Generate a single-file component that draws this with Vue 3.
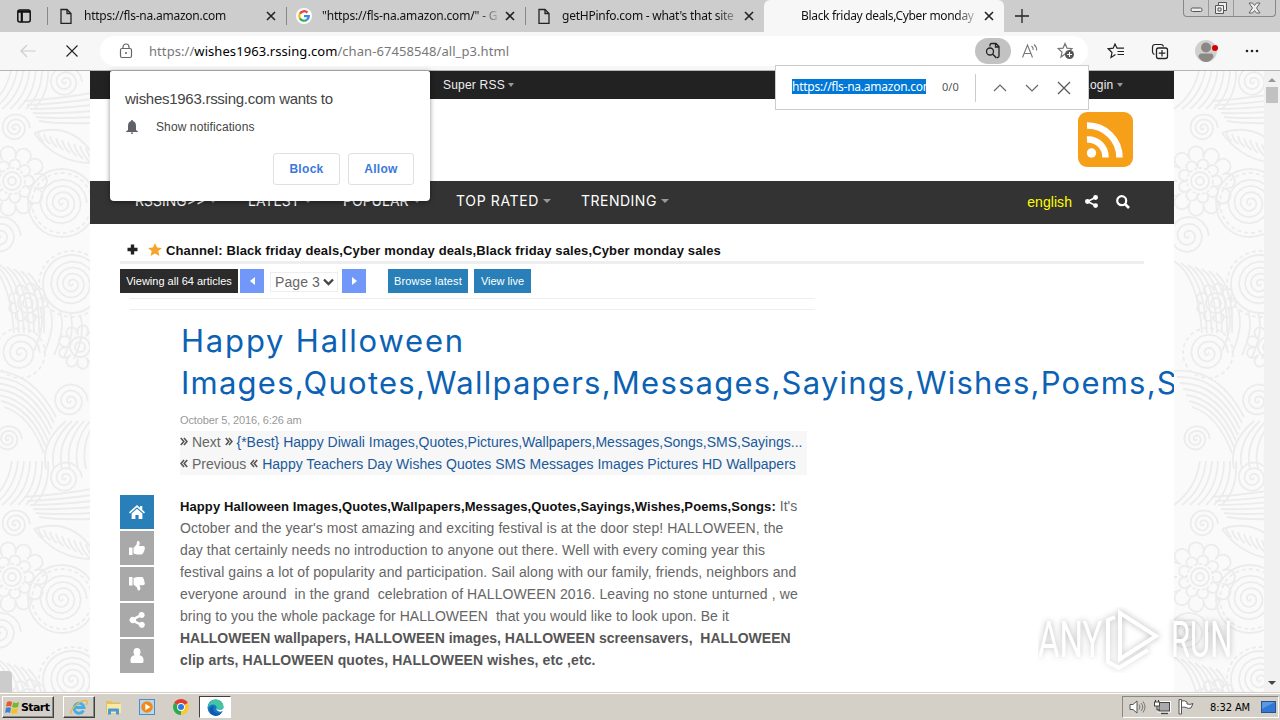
<template>
  <div class="screen">
    <header class="tabStrip">
      <div class="tabMenu">
        <svg width="14" height="14" viewBox="0 0 14 14"><rect x=".8" y="1" width="12.4" height="12" rx="2" fill="none" stroke="#111" stroke-width="1.5"/><path d="M1 2.6h12M4.8 3v10" stroke="#111" stroke-width="2.2"/></svg>
      </div>
      <div v-for="tab in tabs" :key="tab.title" class="tab" :class="tab.kind">
        <svg v-if="tab.icon === 'page'" class="tabIcon" width="12" height="17" viewBox="0 0 12 17"><path d="M1 1.5h6l4 4v9.8H1zM7 1.5v4h4" fill="none" stroke="#222" stroke-width="1.3"/></svg>
        <svg v-else-if="tab.icon === 'google'" class="tabIcon" width="16" height="16" viewBox="0 0 16 16">
          <circle cx="8" cy="8" r="8" fill="#fff"/>
          <g fill="none" stroke-width="2.2"><path d="M11.4 4.6A4.8 4.8 0 0 0 3.8 5.8" stroke="#ea4335"/><path d="M3.8 5.8a4.8 4.8 0 0 0 0 4.5" stroke="#fbbc05"/><path d="M3.8 10.3a4.8 4.8 0 0 0 7.3 1.3" stroke="#34a853"/><path d="M11.1 11.6a4.8 4.8 0 0 0 1.7-3.5H8" stroke="#4285f4"/></g>
        </svg>
        <span class="tabTitle">{{ tab.title }}</span>
        <svg class="tabClose" width="10" height="10" viewBox="0 0 10 10"><path d="M1 1l8 8M9 1L1 9" stroke="#222" stroke-width="1.6"/></svg>
      </div>
      <svg class="newTab" width="14" height="14" viewBox="0 0 14 14"><path d="M7 0v14M0 7h14" stroke="#222" stroke-width="1.3"/></svg>
      <div class="windowButtons">
        <span><svg width="13" height="10" viewBox="0 0 13 10"><rect x="1" y="5" width="11" height="3.5" rx="1.5" fill="#eee" stroke="#555"/></svg></span>
        <span><svg width="14" height="14" viewBox="0 0 14 14"><path d="M4.5 1.5h8v8h-3v3h-8v-8h3z" fill="#eee" stroke="#555"/><path d="M4.5 4.5h5v5M4 7h3v3H4z" fill="none" stroke="#555"/></svg></span>
        <span><svg width="13" height="12" viewBox="0 0 13 12"><path d="M1 1h3.5l2 2.5 2-2.5H12L8.5 6 12 11H8.500l-2-2.500-2 2.500H1L4.500 6z" fill="#eee" stroke="#666"/></svg></span>
      </div>
    </header>

    <div class="toolbar">
      <svg class="back" width="16" height="14" viewBox="0 0 16 14"><path d="M15.500 7H1M7 1L1 7l6 6" fill="none" stroke="#ccc" stroke-width="1.2"/></svg>
      <svg class="stop" width="12" height="12" viewBox="0 0 12 12"><path d="M.5.5l11 11M11.500.5l-11 11" stroke="#222" stroke-width="1.1"/></svg>
      <div class="address">
        <svg class="lock" width="14" height="16" viewBox="0 0 14 16"><rect x="1.500" y="5.500" width="11" height="9" rx="1.500" fill="none" stroke="#666" stroke-width="1.2"/><path d="M4 5.500V4a3 3 0 0 1 6 0v1.500" fill="none" stroke="#666" stroke-width="1.2"/><circle cx="7" cy="10" r="1" fill="#666"/></svg>
        <span class="url">https://<b>wishes1963.rssing.com</b>/chan-67458548/all_p3.html</span>
        <span class="findPill">
          <svg width="16" height="18" viewBox="0 0 16 18"><path d="M5 4.500V3q0-1.500 1.500-1.500H11l3 3V14q0 1.500-1.500 1.500H12M10.500 1.500v3.500H14" fill="none" stroke="#222" stroke-width="1.300"/><circle cx="5" cy="9.500" r="3.500" fill="none" stroke="#222" stroke-width="1.300"/><path d="M7.500 12l4 4" stroke="#222" stroke-width="1.400"/></svg>
        </span>
        <svg class="readAloud" width="18" height="16" viewBox="0 0 18 16"><g fill="none" stroke="#777" stroke-width="1.100"><path d="M1.500 14.500L6.500 2l5 12.500M3 10.500h7"/><path d="M10.500 3q2 1.500 1.700 4M13 1.500q3 2.500 2.600 6"/></g></svg>
        <svg class="addStar" width="18" height="18" viewBox="0 0 18 18"><path d="M8 1.500l2 4.600 5 .5-3.700 3.300L8 12 4 15l1-5L1.200 6.600l4.900-.5z" fill="none" stroke="#777" stroke-width="1.2"/><circle cx="12.500" cy="12.500" r="4.500" fill="#555"/><path d="M12.500 10v5M10 12.500h5" stroke="#fff"/></svg>
      </div>
      <svg class="favs" width="18" height="16" viewBox="0 0 18 16"><path d="M8.500 11.500L4 14.500l1-5L1.200 5.800l5-.6L8 1l2 4.200h7M10.500 8.500H17M10.500 11.500H17" fill="none" stroke="#222" stroke-width="1.200"/></svg>
      <svg class="collections" width="18" height="17" viewBox="0 0 18 17"><path d="M3.500 11.500Q1.800 11 1.500 9V4q.2-2.500 2.500-2.500h6q2 0 2.500 2" fill="none" stroke="#222" stroke-width="1.200"/><rect x="5.500" y="5" width="11" height="10.500" rx="2" fill="none" stroke="#222" stroke-width="1.300"/><path d="M11 7v6.500M7.700 10.200h6.600" stroke="#222" stroke-width="1.200"/></svg>
      <svg class="profile" width="24" height="24" viewBox="0 0 24 24"><circle cx="11" cy="12" r="11" fill="#d2d0cf"/><circle cx="11" cy="8.500" r="5" fill="#8c8886"/><path d="M3.500 18q0-3.500 3-3.500h9q3 0 3 3.500-3 5-7.500 5t-7.500-5z" fill="#8c8886"/><circle cx="20" cy="9" r="3" fill="#d90000"/></svg>
      <svg class="more" width="14" height="4" viewBox="0 0 14 4"><g fill="#222"><circle cx="2" cy="2" r="1.300"/><circle cx="7" cy="2" r="1.300"/><circle cx="12" cy="2" r="1.300"/></g></svg>
    </div>

    <main class="viewport">
      <svg class="wallpaper" width="1264" height="621">
        <defs>
          <g id="ornament" fill="none" stroke="#ececec" stroke-width="1.800">
            <path v-for="(d, i) in swirls" :key="i" :d="d"/>
            <circle v-for="(c, i) in rings" :key="'r' + i" :cx="c[0]" :cy="c[1]" :r="c[2]" :stroke-dasharray="c[3]"/>
          </g>
        </defs>
        <rect width="1264" height="621" fill="#fafafa"/>
        <use v-for="(t, i) in tiles" :key="i" href="#ornament" :x="t[0]" :y="t[1]"/>
      </svg>

      <div class="site">
        <div class="topBar">
          <span class="superRss">Super RSS <i class="caret"></i></span>
          <span class="login">Login <i class="caret"></i></span>
        </div>
        <div class="brand">
          <svg width="55" height="55" viewBox="0 0 55 55"><rect width="55" height="55" rx="9" fill="#f6a01a"/><circle cx="13.500" cy="41" r="4.700" fill="#fff"/><path d="M9 27.500A17.500 17.500 0 0 1 27.500 45.500M9 13.500A32 32 0 0 1 41.500 45.500" fill="none" stroke="#fff" stroke-width="6.500"/></svg>
        </div>
        <nav class="mainNav">
          <span v-for="item in menu" :key="item.label" :class="item.cls">{{ item.label }}<i class="caret"></i></span>
          <span class="lang">english</span>
          <svg class="navShare" width="13" height="13" viewBox="0 0 16 16"><path d="M13 3L3 8l10 5" fill="none" stroke="#fff" stroke-width="2"/><g fill="#fff"><circle cx="13" cy="3" r="3"/><circle cx="3" cy="8" r="3"/><circle cx="13" cy="13" r="3"/></g></svg>
          <svg class="navSearch" width="14" height="14" viewBox="0 0 14 14"><circle cx="5.700" cy="5.700" r="4.500" fill="none" stroke="#fff" stroke-width="2.200"/><path d="M9 9l4 4" stroke="#fff" stroke-width="2.600"/></svg>
        </nav>

        <div class="channel">
          <svg class="plus" width="11" height="11" viewBox="0 0 11 11"><path d="M5.500.5v10M.5 5.500h10" stroke="#222" stroke-width="3.400"/></svg>
          <svg class="star" width="14" height="13" viewBox="0 0 14 13"><path d="M7 0l2 4.400 5 .5-3.700 3.200L11.400 13 7 10.400 2.600 13l1.100-4.900L0 4.900l5-.5z" fill="#f4a52b"/></svg>
          <b>Channel: Black friday deals,Cyber monday deals,Black friday sales,Cyber monday sales</b>
        </div>
        <div class="pager">
          <span class="viewing">Viewing all 64 articles</span>
          <span class="arrow"><svg width="5" height="8" viewBox="0 0 5 8"><path d="M5 0v8L0 4z" fill="#fff"/></svg></span>
          <span class="select">Page 3<svg width="11" height="8" viewBox="0 0 11 8"><path d="M1 1.500l4.500 4.500L10 1.500" fill="none" stroke="#444" stroke-width="2.300"/></svg></span>
          <span class="arrow"><svg width="5" height="8" viewBox="0 0 5 8"><path d="M0 0v8l5-4z" fill="#fff"/></svg></span>
          <span class="blueButton latest">Browse latest</span>
          <span class="blueButton live">View live</span>
        </div>
        <div class="rules"></div>

        <div class="article">
          <aside class="sideIcons">
            <span v-for="icon in sideIcons" :key="icon.name" :class="icon.name">
              <svg width="16" height="16" viewBox="0 0 16 16"><path :d="icon.d" fill="#fff"/></svg>
            </span>
          </aside>
          <div class="post">
            <h1><span class="t1">Happy Halloween</span><br><span class="t2">Images,Quotes,Wallpapers,Messages,Sayings,Wishes,Poems,Songs</span></h1>
            <div class="date">October 5, 2016, 6:26 am</div>
            <div class="siblings">
              <div class="n1"><svg class="dbl" width="8" height="9" viewBox="0 0 8 9"><path :d="chevrons.next"/></svg> Next <svg class="dbl" width="8" height="9" viewBox="0 0 8 9"><path :d="chevrons.next"/></svg> <a>{*Best} Happy Diwali Images,Quotes,Pictures,Wallpapers,Messages,Songs,SMS,Sayings...</a></div>
              <div class="n2"><svg class="dbl" width="8" height="9" viewBox="0 0 8 9"><path :d="chevrons.prev"/></svg> Previous <svg class="dbl" width="8" height="9" viewBox="0 0 8 9"><path :d="chevrons.prev"/></svg> <a>Happy Teachers Day Wishes Quotes SMS Messages Images Pictures HD Wallpapers</a></div>
            </div>
            <div class="copy">
              <p class="l1"><b>Happy Halloween Images,Quotes,Wallpapers,Messages,Quotes,Sayings,Wishes,Poems,Songs:</b> It's</p>
              <p v-for="(line, i) in copy" :key="i" :class="'c' + i">{{ line }}</p>
              <p v-for="(line, i) in boldCopy" :key="line" class="strong" :class="'s' + i">{{ line }}</p>
            </div>
          </div>
        </div>
      </div>

      <div class="scrollbar"><i class="up"></i><i class="thumb"></i><i class="down"></i></div>
      <div class="statusBubble"></div>
    </main>

    <footer class="taskbar">
      <div class="start">
        <svg width="15" height="15" viewBox="0 0 15 15"><path d="M2 2q2.500-1.500 5 0L6 6.800q-2.500-1.500-5 0z" fill="#e8582b"/><path d="M8 2.300q3 1.500 6-.3l-1 5q-3 1.500-6 0z" fill="#78b62f"/><path d="M1 8q2.500-1.500 5 0l-1 5q-2.500-1.500-5 0z" fill="#3c82d4"/><path d="M7 8.300q3 1.500 6 0l-1 4.700q-3 1.500-6 0z" fill="#f8c21c"/></svg>
        Start
      </div>
      <div class="task ie"><svg width="18" height="17" viewBox="0 0 18 17"><path d="M13.500 11.500A5 5 0 1 1 14 8.500H5" fill="none" stroke="#45aee8" stroke-width="2.800"/><path d="M1 15C-1 11 12-1 17 2c1 1 0 3-1 4" fill="none" stroke="#e8b93a" stroke-width="1.300"/></svg></div>
      <div class="task"><svg width="17" height="16" viewBox="0 0 17 16"><path d="M1 2h5l1 1.500h8V14H1z" fill="#e0c060"/><path d="M2 5h14v9H2z" fill="#f8e9a6"/><path d="M3 15.500v-5q0-1 1-1h9q1 0 1 1v5h-3v-3H6v3z" fill="#4b9bd0"/></svg></div>
      <div class="task"><svg width="16" height="16" viewBox="0 0 16 16"><rect x=".5" y=".5" width="15" height="15" fill="#b9d7f0" stroke="#4c8dc8"/><circle cx="8" cy="8" r="5.800" fill="#f28a18"/><path d="M6.300 4.700v6.600L11.500 8z" fill="#fff"/></svg></div>
      <div class="task"><svg width="16" height="16" viewBox="0 0 16 16"><path d="M8 8L1.100 4A8 8 0 0 1 14.900 4z" fill="#e33b2e"/><path d="M8 8l6.900-4A8 8 0 0 1 8 16z" fill="#fcc934"/><path d="M8 8v8A8 8 0 0 1 1.100 4z" fill="#2da94f"/><circle cx="8" cy="8" r="3.900" fill="#fff"/><circle cx="8" cy="8" r="3" fill="#2a7be4"/></svg></div>
      <div class="task active"><svg width="17" height="17" viewBox="0 0 17 17"><circle cx="8.500" cy="8.500" r="8" fill="#1377c9"/><path d="M1 7Q3 .5 9 .5q7 .5 7.500 7-.5 3.500-5 3.500-3-.5-1.800-2.500Q9 5.500 6 5.500q-3.500 0-5 3z" fill="#43c6a0"/><path d="M6.500 7q-1.500 6 4 7.500 3 0 4.500-1.500-2 4-6.500 4-6-1-6-6 1-3.500 4-4z" fill="#1459a8"/><path d="M9.700 8.300Q8.600 11 12.500 11q3.200 0 4.200-2.200l.3 2.700q-2.500 1.500-5 1-3.500-1-2.300-4.200z" fill="#fff"/></svg></div>
      <div class="tray">
        <svg width="17" height="14" viewBox="0 0 17 14"><path d="M1 4.500h3l4-3.500v12L4 9.500H1z" fill="#fff" stroke="#555"/><path d="M10 4.500q2 2.500 0 5M12 3q3.500 4 0 8M14 1.500q4 5.500 0 11" fill="none" stroke="#777"/></svg>
        <svg class="net" width="17" height="16" viewBox="0 0 17 16"><rect x="5" y="3.500" width="10.500" height="8.500" fill="#aaa" stroke="#fff" stroke-width="3"/><rect x="5" y="3.500" width="10.500" height="8.500" fill="#aaa" stroke="#444"/><path d="M7 14.500h7" stroke="#444" stroke-width="1.300"/><path d="M1.500 1v3M4.500 1v3M3 7v4h3" fill="none" stroke="#333"/><rect x=".5" y="3" width="5" height="4" fill="#fff" stroke="#444"/></svg>
        <svg class="flag" width="17" height="16" viewBox="0 0 17 16"><path d="M1 .5h2.500v14.500H1z" fill="#fff" stroke="#555"/><path d="M3.500 2q3-1 5.500 1v2q3 1 6-.5L13 9q-3 1-5-.5-2-1-4.500 0z" fill="#fff" stroke="#555"/></svg>
        <span class="clock">8:32 AM</span>
        <svg class="desktop" width="16" height="13" viewBox="0 0 16 13"><rect x=".5" y=".5" width="14" height="11" fill="#2f78d6" stroke="#27518f"/><path d="M1 1h13L1 8z" fill="#5b97e2"/></svg>
      </div>
    </footer>

    <div class="permission">
      <div class="ask">wishes1963.rssing.com wants to</div>
      <div class="what"><svg width="12" height="14" viewBox="0 0 12 14"><path d="M6 0q1 0 1.100 1.200Q10 2 10 6v4l2 1.500v.5H0v-.5L2 10V6q0-4 2.900-4.800Q5 0 6 0zM4.700 12.500h2.600Q7 14 6 14t-1.300-1.500z" fill="#5f6368"/></svg><span>Show notifications</span></div>
      <div class="answers"><span class="block">Block</span><span class="allow">Allow</span></div>
    </div>

    <div class="findBar">
      <span class="query"><mark>https://fls-na.amazon.com</mark></span>
      <span class="count">0/0</span>
      <svg width="14" height="14" viewBox="0 0 14 14"><path d="M1 10l6-6 6 6" fill="none" stroke="#666" stroke-width="1.200"/></svg>
      <svg width="14" height="14" viewBox="0 0 14 14"><path d="M1 4l6 6 6-6" fill="none" stroke="#666" stroke-width="1.200"/></svg>
      <svg width="14" height="14" viewBox="0 0 14 14"><path d="M1 1l12 12M13 1L1 13" fill="none" stroke="#555" stroke-width="1.200"/></svg>
    </div>

    <div class="watermark">
      <span class="any">ANY</span>
      <svg width="60" height="66" viewBox="0 0 60 66"><g fill="none" stroke="#fff" stroke-width="4"><path d="M16 6v46l36-23z"/><path d="M11 10l-7 3v42l11 6 29-18"/></g></svg>
      <span class="run">RUN</span>
    </div>
  </div>
</template>

<script setup>
const tabs = [
  { title: "https://fls-na.amazon.com", icon: "page", kind: "first" },
  { title: "\"https://fls-na.amazon.com/\" - G", icon: "google", kind: "second" },
  { title: "getHPinfo.com - what's that site", icon: "page", kind: "third" },
  { title: "Black friday deals,Cyber monday", icon: "", kind: "current" },
];

const menu = [
  { label: "RSSING>>", cls: "m1" },
  { label: "LATEST", cls: "m2" },
  { label: "POPULAR", cls: "m3" },
  { label: "TOP RATED", cls: "m4" },
  { label: "TRENDING", cls: "m5" },
];

const copy = [
  "October and the year's most amazing and exciting festival is at the door step! HALLOWEEN, the",
  "day that certainly needs no introduction to anyone out there. Well with every coming year this",
  "festival gains a lot of popularity and participation. Sail along with our family, friends, neighbors and",
  "everyone around  in the grand  celebration of HALLOWEEN 2016. Leaving no stone unturned , we",
  "bring to you the whole package for HALLOWEEN  that you would like to look upon. Be it",
];

const boldCopy = [
  "HALLOWEEN wallpapers, HALLOWEEN images, HALLOWEEN screensavers,  HALLOWEEN",
  "clip arts, HALLOWEEN quotes, HALLOWEEN wishes, etc ,etc.",
];

const chevrons = {
  next: "M.8 1l3 3.500-3 3.500M4 1l3 3.500L4 8",
  prev: "M7.200 1l-3 3.500 3 3.500M4 1L1 4.500 4 8",
};

const sideIcons = [
  { name: "home", d: "M8 1l3 2.700V2h2.300v3.800L16 8.300l-1 1.200L8 3.300 1 9.500 0 8.300zM8 4.800l5.400 4.700V15H9.600v-4H6.400v4H2.600V9.500z" },
  { name: "up", d: "M0 7.500h3.500V15H0zM4.500 8l3-3.500L8.200 1q2.600-.5 2.600 2.200L10 6h4.500q1.500.3 1.200 1.700.5 1-.3 1.800.3 1.200-.6 1.900.2 1.200-.8 1.700-.2 1.400-1.500 1.400H8L4.500 13.500z" },
  { name: "down", d: "M0 1h3.500v8.500H0zM4.500 2L8 1h5q1.500.3 1.300 1.600 1 .7.600 1.800.9.700.5 1.900.7.900.2 2-.3 1-1.600 1h-3.500l1 3q-.2 2.800-2.600 2.200L8 11.500 4.500 8.500z" },
  { name: "share", d: "M12.500 0a3 3 0 1 1-1.800 5.300L7 7.200v1.600l3.700 1.900A3 3 0 1 1 9.800 13L5.500 10.700A3.200 3.200 0 1 1 5.500 5.300L9.700 3A3 3 0 0 1 12.500 0z" },
  { name: "user", d: "M8 0q3.500 0 3.500 4 0 2-1 3.300Q14.500 8 14.500 12v1.500q0 1.500-1.500 1.500H3q-1.500 0-1.500-1.500V12q0-4 4-4.700Q4.500 6 4.500 4 4.500 0 8 0z" },
];

// ornament of the page wallpaper, repeats every 396px
const tiles = [[0, 0], [0, 396], [1188, 0], [1188, 396]];

const range = (n) => Array.from({ length: n }, (_, i) => i);

const spiral = (cx, cy, r, turns = 3) => {
  let d = `M${cx} ${cy}`;
  for (let i = 1; i <= turns * 16; i++) {
    const a = (i / 16) * Math.PI * 2;
    const rr = (r * i) / (turns * 16);
    d += `L${(cx + rr * Math.cos(a)).toFixed(1)} ${(cy + rr * Math.sin(a)).toFixed(1)}`;
  }
  return d;
};

const petals = (cx, cy, r1, r2, n) =>
  range(n).map((i) => {
    const p = (a, r) => `${(cx + r * Math.cos(a)).toFixed(1)} ${(cy + r * Math.sin(a)).toFixed(1)}`;
    const a = (i / n) * Math.PI * 2;
    const w = Math.PI / n;
    return `M${p(a - w, r1)}Q${p(a - w, r2)} ${p(a, r2)}Q${p(a + w, r2)} ${p(a + w, r1)}`;
  }).join("");

const swirls = [
  spiral(65, 11, 17), spiral(15, 57, 15), spiral(62, 132, 25, 4), spiral(0, 165, 21), spiral(72, 213, 24, 4),
  spiral(20, 282, 20), spiral(70, 330, 18), spiral(8, 368, 14),
  petals(12, 110, 13, 22, 9), petals(12, 110, 23, 35, 11), petals(28, 232, 12, 20, 9), petals(80, 276, 12, 22, 9),
  // arcs of the top left corner
  ...range(7).map((i) => `M${-14 + i * 8} 38Q${8 + i * 7} 22 ${12 + i * 6} -6`),
  // long waves under the first spiral
  ...range(6).map((i) => `M${24 + i * 3} ${30 + i * 4}Q56 ${28 + i * 5} 92 ${22 + i * 6}`),
  // fern leaf
  "M34 62Q70 50 92 82M34 62Q56 92 92 92",
  ...range(9).map((i) => `M${38 + i * 6} ${61 + i * 2}q2 8 ${6 + i * .5} ${9 + i}`),
  // fan left of the lower spiral
  ...range(7).map((i) => `M${-14 + i * 7} ${190 + i * 2}Q${10 + i * 6} ${205 + i * 2} ${14 + i * 5} 262`),
  ...range(7).map((i) => `M${-14 + i * 3} ${300 + i * 6}Q30 ${296 + i * 8} ${56 - i * 2} ${346 + i * 6}`),
  ...range(6).map((i) => `M${46 + i * 8} 398Q${40 + i * 8} 372 ${66 + i * 6} 350`),
  ...range(5).map((i) => `M${40 + i * 10} ${236 + i * 2}q6 18 -6 44`),
];

const rings = [
  [12, 110, 4], [12, 110, 9], [12, 110, 13, "3 2"], [62, 132, 30, "4 3"], [62, 132, 34],
  [72, 213, 29], [72, 213, 33, "4 3"], [28, 232, 5], [28, 232, 10], [80, 276, 5], [80, 276, 10], [20, 282, 25, "4 3"],
];
</script>

<style>
html,
body{
  overflow: hidden;
}
</style>

<style scoped>
.screen{
  position: relative;
  display: flex;
  flex-direction: column;
  width: 1280px;
  height: 720px;
  overflow: hidden;
  background: #fff;
  font-family: "Liberation Sans", Arial, sans-serif;
  white-space: nowrap;
}

.screen svg{
  display: block;
  flex: none;
}

/* =========================
   Tabs
========================= */
.tabStrip{
  display: flex;
  height: 32px;
  flex: none;
  background: #cdcdcd;
  font: 12px/32px "Noto Sans", sans-serif;
  letter-spacing: -.24px;
  color: #111;
}

.tabMenu{
  width: 47px;
  padding: 9px 0 0 17px;
  box-sizing: border-box;
}

.tab{
  display: flex;
  align-items: center;
  width: 239px;
  box-sizing: border-box;
  padding: 0 10px 0 13px;
  position: relative;
}

.tab::before{
  content: "";
  position: absolute;
  left: 0;
  top: 7px;
  width: 1px;
  height: 18px;
  background: #888;
}

.tab.current{
  width: 240px;
  background: #f7f7f7;
  border-radius: 6px 6px 0 0;
  padding-left: 37px;
  letter-spacing: -.33px;
}

.tab.current::before{ display: none; }

.tabIcon{ margin-right: 12px; }
.second .tabIcon{ margin: 0 10px 0 -3px; }

.tabTitle{
  flex: 1;
  -webkit-mask-image: linear-gradient(90deg, #000 155px, transparent 180px);
  mask-image: linear-gradient(90deg, #000 155px, transparent 180px);
}

.second{ letter-spacing: -.18px; }

.newTab{ margin: 9px 0 0 11px; }

.windowButtons{
  display: flex;
  margin: 0 4px 0 auto;
  height: 16px;
  border: 1px solid #888;
  border-top: 0;
  border-radius: 0 0 4px 4px;
}

.windowButtons span{
  display: flex;
  align-items: center;
  justify-content: center;
  width: 24px;
  border-right: 1px solid #999;
}

.windowButtons span:last-child{
  width: 41px;
  border: 0;
}

/* =========================
   Toolbar
========================= */
.toolbar{
  display: flex;
  align-items: center;
  height: 38px;
  flex: none;
  background: #f7f7f7;
  border-bottom: 1px solid #b5b5b5;
}

.back{ margin-left: 20px; }
.stop{ margin-left: 30px; }

.address{
  display: flex;
  align-items: center;
  width: 988px;
  height: 30px;
  margin-left: 22px;
  border-radius: 15px;
  background: #fff;
  box-sizing: border-box;
}

.lock{ margin-left: 19px; }

.url{
  flex: 1;
  margin-left: 16px;
  font: 13px/30px "Noto Sans", sans-serif;
  letter-spacing: .07px;
  color: #777;
}

.url b{
  font-weight: 400;
  color: #000;
}

.findPill{
  display: flex;
  align-items: center;
  justify-content: center;
  width: 36px;
  height: 26px;
  border-radius: 13px;
  background: #c2c2c2;
}

.readAloud{ margin-left: 10px; }
.addStar{ margin: 0 13px 0 18px; }
.favs{ margin-left: 19px; }
.collections{ margin-left: 26px; }
.profile{ margin-left: 26px; }
.more{ margin-left: 26px; }

/* =========================
   Page
========================= */
.viewport{
  position: relative;
  display: flex;
  height: 621px;
  flex: none;
}

.wallpaper{
  position: absolute;
  left: 0;
  top: 0;
}

.site{
  position: relative;
  width: 1084px;
  margin-left: 90px;
  overflow: hidden;
  background: #fff;
}

.caret{
  display: inline-block;
  border: 3.5px solid transparent;
  border-top: 4px solid #999;
  border-bottom: 0;
  vertical-align: 2px;
}

.topBar{
  display: flex;
  justify-content: space-between;
  height: 28px;
  background: #222;
  color: #eee;
  font-size: 12px;
  line-height: 28px;
  letter-spacing: .2px;
}

.superRss{ margin-left: 353px; }
.login{ margin-right: 51px; }

.brand{
  display: flex;
  justify-content: flex-end;
  height: 82px;
  padding: 13px 41px 0 0;
  box-sizing: border-box;
}

.mainNav{
  display: flex;
  height: 43px;
  background: #333;
  color: #fff;
  font: 14px/40px Inter, sans-serif;
}

.mainNav .caret{
  margin-left: 4px;
  border-width: 4px 4px 0;
  vertical-align: 3px;
}

.m1{ width: 113px; margin-left: 45px; }
.m2{ width: 95px; }
.m3{ width: 113px; }
.m4{ width: 125px; letter-spacing: .65px; }
.m5{ letter-spacing: .5px; }

.lang{
  margin-left: auto;
  font: 14px/42px "Liberation Sans", Arial, sans-serif;
  letter-spacing: .05px;
  color: #ff0;
}

.navShare{ margin: 14px 0 0 13px; }
.navSearch{ margin: 14px 44px 0 18px; }

.channel{
  display: flex;
  align-items: center;
  height: 40px;
  margin: 0 30px;
  padding: 13px 0 0 7px;
  box-sizing: border-box;
  border-bottom: 3px solid #eee;
  font-size: 13px;
  line-height: 15px;
  letter-spacing: .13px;
  color: #111;
}

.channel b{ padding-top: 2px; }

.star{ margin: 0 4px 0 10px; }

.pager{
  display: flex;
  height: 24px;
  margin: 5px 0 0 30px;
  font-size: 11px;
  line-height: 24px;
  color: #fff;
}

.viewing{
  width: 118px;
  background: #2b2b2b;
  text-align: center;
}

.arrow{
  display: flex;
  align-items: center;
  justify-content: center;
  width: 24px;
  margin-left: 2px;
  background: #7198f8;
}

.select{
  display: flex;
  align-items: center;
  width: 68px;
  height: 20px;
  margin: 3px 2px 0 6px;
  padding-left: 4px;
  box-sizing: border-box;
  border: 1px solid #eee;
  color: #666;
  font-size: 14px;
  letter-spacing: .1px;
}

.select svg{ margin-left: 3px; }

.blueButton{
  background: #2980b9;
  text-align: center;
}

.latest{
  width: 80px;
  margin-left: 22px;
  letter-spacing: .15px;
}

.live{ width: 57px; margin-left: 6px; }

.rules{
  width: 685px;
  height: 10px;
  margin: 5px 0 0 40px;
  border-top: 1px solid #eee;
  border-bottom: 1px solid #eee;
}

.article{ display: flex; }

.sideIcons{
  display: flex;
  flex-direction: column;
  gap: 2px;
  margin: 185px 0 0 30px;
}

.sideIcons span{
  display: flex;
  align-items: center;
  justify-content: center;
  width: 34px;
  height: 34px;
  background: #a9a9a9;
}

.sideIcons .home{ background: #2980b9; }

.post{ margin-left: 26px; }

h1{
  margin: 10px 0 0;
  padding-left: 1px;
  font: 400 31px/42px Inter, sans-serif;
  color: #0b62b4;
}

.t1{ letter-spacing: 1.82px; }
.t2{ letter-spacing: 1.24px; }

.date{
  margin-top: 9px;
  font-size: 11px;
  line-height: 14px;
  letter-spacing: -.13px;
  color: #999;
}

.siblings{
  width: 627px;
  margin-top: 4px;
  background: #f7f7f7;
  font-size: 14px;
  line-height: 22px;
  color: #666;
}

.siblings a{ color: #1b5a9a; }
.n2 a{ letter-spacing: .02px; }

.siblings .dbl{
  display: inline-block;
  vertical-align: 1px;
  fill: none;
  stroke: #555;
  stroke-width: 1.6;
}

.copy{
  margin-top: 20px;
  font-size: 14px;
  line-height: 22px;
  color: #666;
  white-space: pre;
}

.copy p{
  height: 22px;
  margin: 0;
}

.l1 b{
  color: #111;
  font-size: 13px;
  line-height: 20px;
  letter-spacing: .1px;
}

.c0{ letter-spacing: .075px; }
.c1,
.c2,
.c3{ letter-spacing: .1px; }
.c4{ letter-spacing: .05px; }
.strong{ font-weight: 700; color: #555; }
.s0{ letter-spacing: .01px; }
.s1{ letter-spacing: .1px; }

/* =========================
   Scrollbar
========================= */
.scrollbar{
  position: relative;
  width: 16px;
  margin-left: auto;
  background: #f1f1f1;
}

.scrollbar i{
  position: absolute;
  left: 4px;
  border: 4px solid transparent;
}

.scrollbar .up{ top: 3px; border-bottom-color: #999; }
.scrollbar .down{ bottom: 3px; border-top-color: #444; }

.scrollbar .thumb{
  top: 16px;
  left: 2px;
  width: 12px;
  height: 16px;
  border: 0;
  background: #c1c1c1;
}

.statusBubble{
  position: absolute;
  left: 0;
  bottom: 0;
  width: 12px;
  height: 21px;
  border-radius: 0 4px 0 0;
  background: #ccc;
}

/* =========================
   Taskbar
========================= */
.taskbar{
  display: flex;
  height: 28px;
  flex: none;
  padding: 3px 1px 2px 2px;
  box-sizing: border-box;
  background: #d4d0c8;
  border-top: 1px solid #d4d0c8;
  box-shadow: inset 0 1px #fff;
}

.start,
.task.ie{
  border: 1px solid;
  border-color: #fff #404040 #404040 #fff;
  box-shadow: inset -1px -1px #888;
}

.start{
  display: flex;
  align-items: center;
  gap: 1px;
  width: 52px;
  padding-left: 2px;
  box-sizing: border-box;
  font: 700 11px "DejaVu Sans", sans-serif;
  letter-spacing: -.6px;
}

.task{
  display: flex;
  align-items: center;
  justify-content: center;
  width: 32px;
  margin-right: 2px;
  box-sizing: border-box;
}

.task.ie{ margin-left: 9px; }

.task.active{
  border: 1px solid;
  border-color: #404040 #fff #fff #404040;
  background: #fff;
}

.tray{
  display: flex;
  align-items: center;
  width: 157px;
  margin-left: auto;
  padding-left: 6px;
  box-sizing: border-box;
  border: 1px solid;
  border-color: #888 #fff #fff #888;
}

.net{ margin-left: 8px; }
.flag{ margin-left: 7px; }

.clock{
  flex: 1;
  text-align: right;
  font: 11px "DejaVu Sans Condensed", "DejaVu Sans", sans-serif;
  letter-spacing: -.1px;
}

.desktop{ margin: 0 1px 0 11px; }

/* =========================
   Overlays
========================= */
.permission{
  position: absolute;
  left: 110px;
  top: 71px;
  width: 320px;
  height: 130px;
  padding: 19px 16px 0 15px;
  box-sizing: border-box;
  border-radius: 2px 2px 4px 4px;
  background: #fff;
  box-shadow: 0 1px 5px rgba(0,0,0,.45);
  color: #444;
}

.ask{
  font-size: 15px;
  line-height: 18px;
  letter-spacing: -.27px;
}

.what{
  display: flex;
  gap: 18px;
  margin: 12px 0 0 1px;
  font-size: 12px;
  line-height: 14px;
  letter-spacing: .1px;
}

.answers{
  display: flex;
  justify-content: flex-end;
  gap: 8px;
  margin-top: 19px;
}

.answers span{
  width: 66px;
  height: 32px;
  box-sizing: border-box;
  border: 1px solid #e0e0e0;
  border-radius: 3px;
  text-align: center;
  font-size: 12px;
  font-weight: 700;
  line-height: 30px;
  letter-spacing: .3px;
  color: #3b78dd;
}

.answers .block{ width: 67px; }

.findBar{
  position: absolute;
  left: 775px;
  top: 65px;
  display: flex;
  align-items: center;
  width: 314px;
  height: 45px;
  padding-left: 16px;
  box-sizing: border-box;
  border: 1px solid #ccc;
  background: #fff;
}

.query{
  width: 134px;
  margin-top: -2px;
  overflow: hidden;
  font: 12px/15px "Noto Sans", sans-serif;
  letter-spacing: -.25px;
}

.query mark{
  background: #0078d7;
  color: #fff;
}

.count{
  width: 33px;
  margin-right: 17px;
  padding: 6px 0 8px 16px;
  border-right: 1px solid #ccc;
  font: 11px/14px "Noto Sans", sans-serif;
  color: #555;
}

.findBar svg + svg{ margin-left: 18px; }

.watermark{
  position: absolute;
  left: 1038px;
  top: 607px;
  display: flex;
  align-items: center;
  width: 200px;
  height: 66px;
  font: 400 50px/66px Roboto, sans-serif;
  color: #fff;
  filter: drop-shadow(0 0 3px rgba(0,0,0,.3));
  -webkit-mask-image: linear-gradient(#000 45%, rgba(0,0,0,.5) 90%);
  mask-image: linear-gradient(#000 45%, rgba(0,0,0,.5) 90%);
}

.watermark span{
  display: block;
  width: 66px;
  transform: scaleX(.66);
  transform-origin: 0 50%;
}

.watermark .run{
  margin-left: 7px;
  transform: scaleX(.62);
}
</style>
